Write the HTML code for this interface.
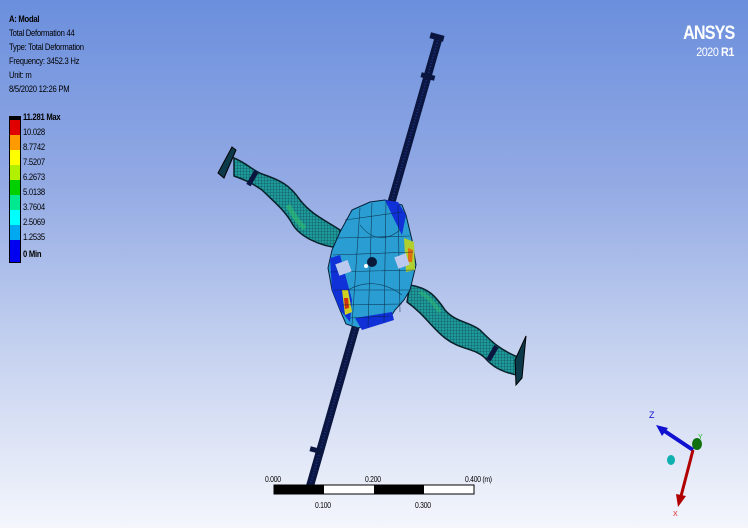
<!DOCTYPE html>
<html><head><style>
html,body{margin:0;padding:0;}
body{width:748px;height:528px;overflow:hidden;position:relative;background:linear-gradient(#6b8fdd 0%,#93aae4 35%,#c3d0ef 65%,#f4f6fc 100%);font-family:"Liberation Sans",sans-serif;}
.t{position:absolute;font-size:9px;color:#000;letter-spacing:-0.3px;white-space:nowrap;transform:scaleX(0.85);transform-origin:left;}
</style></head><body>
<div class="t" style="left:9px;top:14px;font-weight:bold;">A: Modal</div>
<div class="t" style="left:9px;top:28px;">Total Deformation 44</div>
<div class="t" style="left:9px;top:42px;">Type: Total Deformation</div>
<div class="t" style="left:9px;top:56px;">Frequency: 3452.3 Hz</div>
<div class="t" style="left:9px;top:70px;">Unit: m</div>
<div class="t" style="left:9px;top:84px;">8/5/2020 12:26 PM</div>
<div style="position:absolute;left:9px;top:116px;width:10px;height:145px;border:0.5px solid #000;background:linear-gradient(#000 0 3px,#e00000 3px 18px,#ff9a00 18px 33px,#ffff00 33px 48px,#b0f000 48px 63px,#00d000 63px 78px,#00e890 78px 93px,#00ffff 93px 108px,#00a8f0 108px 123px,#0000f0 123px 145px);"></div>
<div class="t" style="left:23px;top:112px;font-weight:bold;">11.281 Max</div>
<div class="t" style="left:23px;top:127px;">10.028</div>
<div class="t" style="left:23px;top:142px;">8.7742</div>
<div class="t" style="left:23px;top:157px;">7.5207</div>
<div class="t" style="left:23px;top:172px;">6.2673</div>
<div class="t" style="left:23px;top:187px;">5.0138</div>
<div class="t" style="left:23px;top:202px;">3.7604</div>
<div class="t" style="left:23px;top:217px;">2.5069</div>
<div class="t" style="left:23px;top:232px;">1.2535</div>
<div class="t" style="left:23px;top:249px;font-weight:bold;">0 Min</div>
<div style="position:absolute;right:14px;top:23px;color:#fff;font-weight:bold;font-size:19px;letter-spacing:-1px;transform:scaleX(0.85);transform-origin:right;">ANSYS</div>
<div style="position:absolute;right:14px;top:45px;color:#fff;font-size:12px;letter-spacing:-0.5px;transform:scaleX(0.9);transform-origin:right;">2020 <b>R1</b></div>
<svg width="748" height="528" style="position:absolute;left:0;top:0" xmlns="http://www.w3.org/2000/svg">
<defs>
<pattern id="m" width="3" height="3" patternUnits="userSpaceOnUse"><rect width="3" height="3" fill="#1f9a9c"/><path d="M0 0H3M0 0V3" stroke="#0a3a40" stroke-width="0.6"/></pattern>
</defs>
<line x1="438" y1="40" x2="308" y2="493" stroke="#0b1640" stroke-width="8"/>
<line x1="438" y1="40" x2="308" y2="493" stroke="#1a2e80" stroke-width="2" stroke-dasharray="1 2"/>
<rect x="430" y="34" width="14" height="6" fill="#0b1640" transform="rotate(15 437 37)"/>
<rect x="421" y="74" width="14" height="5" fill="#0b1640" transform="rotate(15 428 76)"/>
<rect x="310" y="448" width="14" height="5" fill="#0b1640" transform="rotate(15 317 450)"/>
<path d="M234 158 C248 164 252 170 262 174 C280 180 290 185 300 200 C312 215 325 220 340 230 L340 248 C318 246 300 236 293 225 C285 210 272 200 262 190 C252 183 245 180 234 176 Z" fill="url(#m)" stroke="#07202a" stroke-width="1.5"/>
<path d="M288 205 C293 215 300 225 305 228" stroke="#30c070" stroke-width="5" fill="none" opacity="0.6"/>
<path d="M218 173 L232 147 L236 150 L224 178 Z" fill="#0d3a4a" stroke="#000" stroke-width="1"/>
<rect x="250" y="170" width="5" height="16" fill="#0b1640" transform="rotate(30 252 178)"/>
<path d="M410 285 C428 288 435 295 445 310 C455 322 470 322 480 330 C492 342 500 350 520 358 L521 376 C500 372 492 366 485 358 C475 348 460 350 445 338 C432 328 425 315 407 302 Z" fill="url(#m)" stroke="#07202a" stroke-width="1.5"/>
<path d="M420 292 C430 298 435 305 440 312" stroke="#30c070" stroke-width="4" fill="none" opacity="0.5"/>
<path d="M515 360 L526 336 L522 378 L516 385 Z" fill="#0d3a4a" stroke="#000" stroke-width="1"/>
<rect x="490" y="345" width="5" height="16" fill="#0b1640" transform="rotate(30 492 353)"/>
<path d="M352 210 L370 202 L385 200 L402 205 L406 215 L412 240 L416 265 L410 290 L404 300 L395 310 L390 318 L372 324 L358 328 L346 324 L340 310 L332 290 L328 268 L332 250 L340 232 Z" fill="#2a9ed2" stroke="#06203a" stroke-width="1"/>
<path d="M385 200 L398 202 L406 215 L402 235 L392 215 Z" fill="#1030d8"/>
<path d="M330 258 L340 255 L352 300 L350 322 L340 310 L332 290 Z" fill="#1030d8"/>
<path d="M342 290 L348 290 L352 312 L345 315 Z" fill="#d0d020"/>
<path d="M344 298 L348 298 L349 308 L345 309 Z" fill="#d03010"/>
<path d="M404 238 L414 242 L415 270 L406 272 Z" fill="#b0d030"/>
<path d="M408 248 L413 250 L412 262 L408 262 Z" fill="#e07010"/>
<path d="M355 318 L392 312 L394 320 L362 330 Z" fill="#1030d8"/>
<g stroke="#06203a" stroke-width="0.6" fill="none" opacity="0.8">
<path d="M345 220 L402 212 M338 238 L410 236 M333 255 L413 252 M330 272 L414 270 M334 290 L410 290 M342 305 L402 304 M350 318 L390 316"/>
<path d="M360 208 L352 325 M372 203 L368 327 M386 201 L384 322 M398 205 L400 312"/>
<path d="M360 225 C372 240 385 242 400 230 M348 290 C365 280 385 282 402 295"/>
</g>
<rect x="337" y="262" width="13" height="12" fill="#bcc9ee" transform="rotate(-20 343 268)"/>
<rect x="396" y="255" width="12" height="12" fill="#bcc9ee" transform="rotate(-20 402 261)"/>
<circle cx="372" cy="262" r="5" fill="#0a1a3a"/>
<circle cx="366" cy="266" r="2" fill="#fff"/>
<rect x="274" y="485" width="200" height="9" fill="#fff" stroke="#000" stroke-width="1"/>
<rect x="274" y="485" width="50" height="9" fill="#000"/>
<rect x="374" y="485" width="50" height="9" fill="#000"/>
<line x1="693" y1="450" x2="660" y2="428" stroke="#1010d0" stroke-width="4"/>
<polygon points="656,425 668,428 662,436" fill="#1010d0"/>
<line x1="693" y1="450" x2="680" y2="500" stroke="#b00000" stroke-width="3"/>
<polygon points="678,507 676,494 686,496" fill="#b00000"/>
<ellipse cx="697" cy="444" rx="5" ry="6" fill="#107010"/>
<ellipse cx="671" cy="460" rx="4" ry="5" fill="#10b0b0"/>
<text x="649" y="418" font-size="9" fill="#1010d0" font-family="Liberation Sans">Z</text>
<text x="698" y="439" font-size="7" fill="#20c020" font-family="Liberation Sans">Y</text>
<text x="673" y="516" font-size="7" fill="#e02020" font-family="Liberation Sans">X</text>
</svg>
<div class="t" style="left:265px;top:475px;font-size:8px;">0.000</div>
<div class="t" style="left:365px;top:475px;font-size:8px;">0.200</div>
<div class="t" style="left:465px;top:475px;font-size:8px;">0.400 (m)</div>
<div class="t" style="left:315px;top:501px;font-size:8px;">0.100</div>
<div class="t" style="left:415px;top:501px;font-size:8px;">0.300</div>
</body></html>
